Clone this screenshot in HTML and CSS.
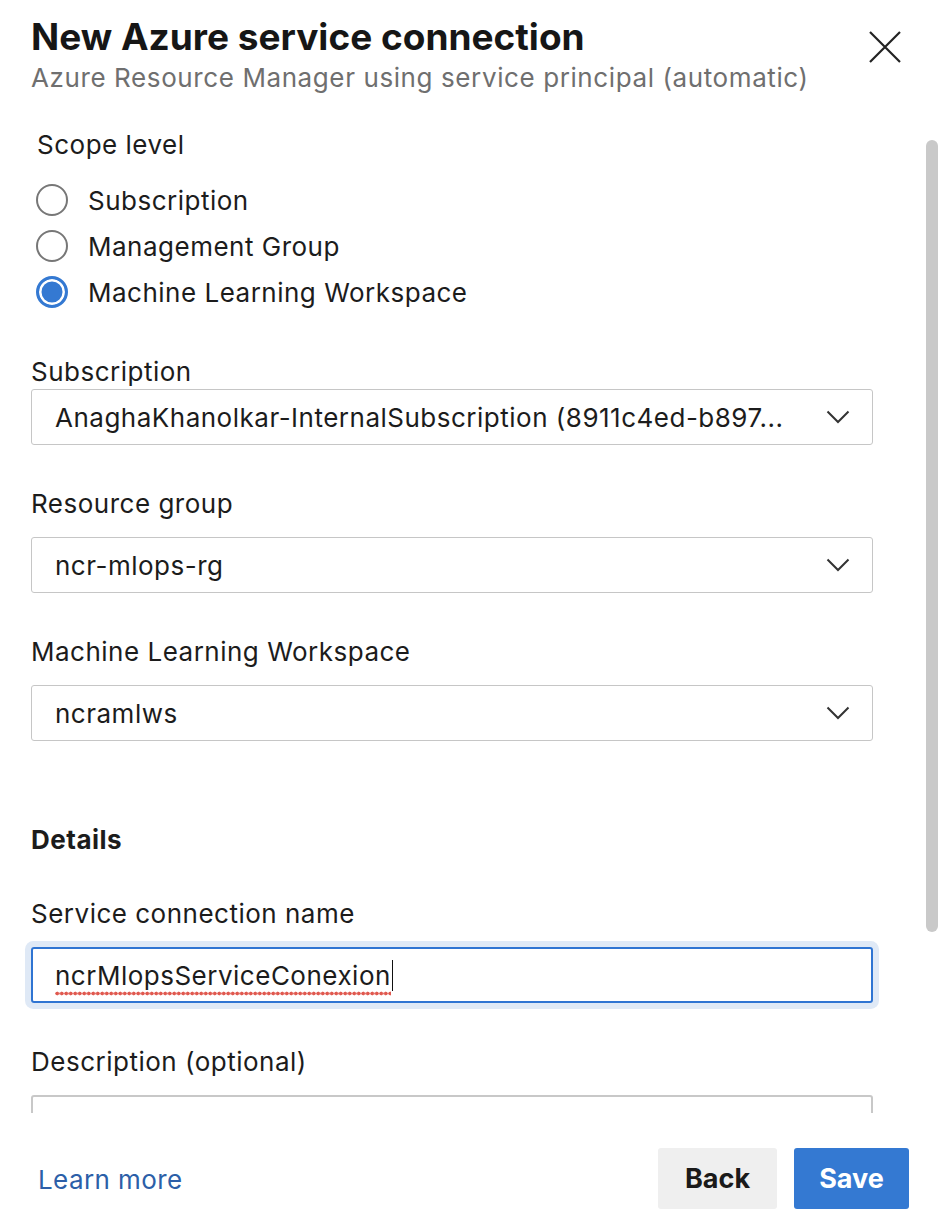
FILE: index.html
```html
<!DOCTYPE html>
<html lang="en">
<head>
<meta charset="utf-8">
<title>New Azure service connection</title>
<link rel="stylesheet" href="styles.css">
</head>
<body>
<div class="dialog">
  <header class="head">
    <div class="titles">
      <h1 class="title">New Azure service connection</h1>
      <p class="subtitle">Azure Resource Manager using service principal (automatic)</p>
    </div>
    <button class="close" aria-label="Close">
      <svg width="34" height="34" viewBox="0 0 34 34"><path d="M2 2 L32 32 M32 2 L2 32" stroke="#222" stroke-width="2.2" fill="none"/></svg>
    </button>
  </header>

  <div class="body">
    <div class="content">
      <div class="scope">
        <div class="scope-label">Scope level</div>
        <div class="radio-row"><span class="radio"></span><span>Subscription</span></div>
        <div class="radio-row"><span class="radio"></span><span>Management Group</span></div>
        <div class="radio-row"><span class="radio checked"></span><span>Machine Learning Workspace</span></div>
      </div>

      <div class="field first">
        <label class="label">Subscription</label>
        <div class="select"><span class="value">AnaghaKhanolkar-InternalSubscription (8911c4ed-b897...</span>
          <svg class="chev" width="24" height="14" viewBox="0 0 24 14"><path d="M1.5 1.5 L12 12 L22.5 1.5" stroke="#333" stroke-width="2" fill="none"/></svg></div>
      </div>

      <div class="field">
        <label class="label">Resource group</label>
        <div class="select"><span class="value">ncr-mlops-rg</span>
          <svg class="chev" width="24" height="14" viewBox="0 0 24 14"><path d="M1.5 1.5 L12 12 L22.5 1.5" stroke="#333" stroke-width="2" fill="none"/></svg></div>
      </div>

      <div class="field">
        <label class="label">Machine Learning Workspace</label>
        <div class="select"><span class="value">ncramlws</span>
          <svg class="chev" width="24" height="14" viewBox="0 0 24 14"><path d="M1.5 1.5 L12 12 L22.5 1.5" stroke="#333" stroke-width="2" fill="none"/></svg></div>
      </div>

      <h2 class="section">Details</h2>

      <div class="field">
        <label class="label">Service connection name</label>
        <div class="input focused"><span class="typed">ncrMlopsServiceConexion</span><span class="caret"></span></div>
      </div>

      <div class="field">
        <label class="label">Description (optional)</label>
        <div class="textarea"></div>
      </div>
    </div>
    <div class="thumb"></div>
  </div>

  <footer class="foot">
    <a class="learn" href="#">Learn more</a>
    <div class="actions">
      <button class="btn back">Back</button>
      <button class="btn save">Save</button>
    </div>
  </footer>
</div>
</body>
</html>
```

FILE: styles.css
```css
* { box-sizing: border-box; }
html, body { margin: 0; padding: 0; background: #fff; }
body {
  font-family: Inter, "Noto Sans", "Liberation Sans", sans-serif;
  color: #1c1c1c;
  width: 940px;
  height: 1228px;
  overflow: hidden;
}
.dialog {
  display: flex;
  flex-direction: column;
  height: 1228px;
}
.head {
  display: flex;
  justify-content: space-between;
  align-items: flex-start;
  padding: 14px 38px 0 31px;
  height: 94px;
  flex: none;
}
.title {
  margin: 0;
  font-size: 37px;
  line-height: 46px;
  font-weight: 700;
  letter-spacing: 0;
  color: #161616;
}
.subtitle {
  margin: 2px 0 0;
  font-size: 26px;
  line-height: 32px;
  color: #6f6f6f;
  letter-spacing: 0.6px;
}
.close {
  margin-top: 16px;
  padding: 0;
  border: 0;
  background: none;
  width: 34px;
  height: 34px;
  display: flex;
}
.body {
  position: relative;
  height: 1019px;
  overflow: hidden;
  flex: none;
}
.content {
  padding: 35px 0 0 31px;
  width: 873px;
  font-size: 26px;
  letter-spacing: 0.5px;
}
.thumb {
  position: absolute;
  top: 46px;
  right: 2px;
  width: 12px;
  height: 792px;
  border-radius: 6px;
  background: #c9c9c9;
}
.scope {
  padding-left: 5px;
  margin-bottom: 41px;
}
.scope-label {
  line-height: 32px;
  margin-bottom: 16px;
  padding-left: 1px;
}
.radio-row {
  display: flex;
  align-items: center;
  gap: 20px;
  height: 46px;
}
.radio {
  width: 32px;
  height: 32px;
  border-radius: 50%;
  border: 2px solid #777;
  flex: none;
}
.radio.checked {
  border: 3px solid #3479d2;
  background: #3479d2;
  box-shadow: inset 0 0 0 2.5px #fff;
}
.field { margin-bottom: 43px; }
.label {
  display: block;
  line-height: 32px;
  margin-bottom: 17px;
}
.field.first .label { margin-bottom: 1px; }
.select, .input {
  height: 56px;
  border: 1px solid #c6c6c6;
  border-radius: 3px;
  display: flex;
  align-items: center;
  justify-content: space-between;
  padding: 0 22px 0 23px;
}
.value {
  white-space: nowrap;
  overflow: hidden;
}
.chev { flex: none; }
.input.focused {
  border: 2px solid #2f74d2;
  box-shadow: 0 0 0 6px #dfe9f6;
  justify-content: flex-start;
  padding-left: 22px;
}
.typed {
  padding-bottom: 5px;
  margin-bottom: -5px;
  background-image: radial-gradient(circle, #e0594f 1.7px, rgba(224,89,79,0) 2.2px);
  background-size: 4.5px 5px;
  background-repeat: repeat-x;
  background-position: 0 100%;
}
.caret {
  display: inline-block;
  width: 1.5px;
  height: 31px;
  background: #111;
  margin-left: 1px;
}
.section {
  margin: 83px 0 42px;
  font-size: 26px;
  line-height: 32px;
  font-weight: 700;
}
.textarea {
  height: 80px;
  border: 2px solid #c8c8c8;
  border-radius: 3px;
}
.foot {
  flex: 1;
  display: flex;
  justify-content: space-between;
  align-items: flex-start;
  padding: 35px 31px 0 38px;
}
.learn {
  color: #2c5fa8;
  text-decoration: none;
  font-size: 26px;
  line-height: 32px;
  letter-spacing: 0.4px;
  margin-top: 16px;
}
.actions {
  display: flex;
  gap: 17px;
}
.btn {
  height: 61px;
  border: 0;
  border-radius: 3px;
  font-family: inherit;
  font-size: 27px;
  font-weight: 700;
  padding: 0;
}
.back {
  width: 119px;
  background: #efefef;
  color: #1a1a1a;
}
.save {
  width: 115px;
  background: #3479d2;
  color: #fff;
}
```
